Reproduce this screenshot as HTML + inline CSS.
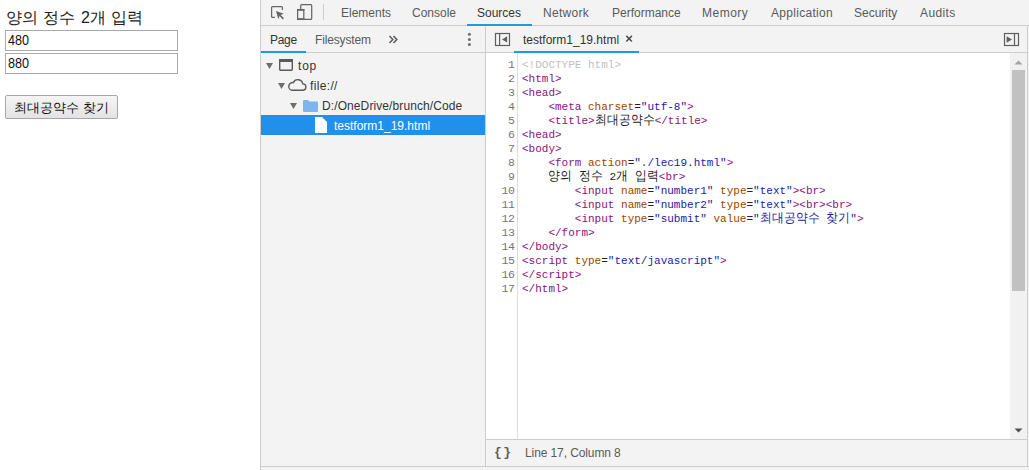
<!DOCTYPE html>
<html>
<head>
<meta charset="utf-8">
<style>
*{box-sizing:border-box}
html,body{margin:0;padding:0}
body{width:1029px;height:470px;overflow:hidden;position:relative;background:#fff;font-family:"Liberation Sans",sans-serif;}
.a{position:absolute}
.ui{position:absolute;font-size:12px;line-height:14px;color:#5a5a5a;white-space:nowrap}
.lbl{left:6px;top:8px;font-size:16px;line-height:20px;word-spacing:1px;color:#222;white-space:nowrap}
.inp{left:5px;width:173px;height:21px;border:1px solid #a9a9a9;background:#fff;font-size:14px;line-height:15px;color:#111;padding:2px 0 0 1.5px}
.inp span{display:inline-block;transform:scaleX(0.9);transform-origin:0 50%}
.btn{left:5px;top:95px;width:113px;height:24px;border:1px solid #a7a7a7;border-radius:2px;background:linear-gradient(#f5f5f5,#e3e3e3);font-size:13px;line-height:16px;color:#111;text-align:center;padding-top:4px;white-space:nowrap}
.ln{position:absolute;width:30px;text-align:right;left:484.6px;font-family:"Liberation Mono",monospace;font-size:11.5px;letter-spacing:-0.3px;line-height:14px;color:#767676}
.cl{position:absolute;left:522px;font-family:"Liberation Mono",monospace;font-size:11px;line-height:14px;color:#222;white-space:pre}
.k{font-size:12px;display:inline-block;transform:scaleY(1.1);transform-origin:50% 55%}
.tg{color:#881280}.at{color:#994500}.vl{color:#1a1aa6}.dc{color:#c0c0c0}
</style>
</head>
<body>
<!-- left page -->
<div class="a lbl">양의 정수 2개 입력</div>
<div class="a inp" style="top:30px"><span>480</span></div>
<div class="a inp" style="top:53px"><span>880</span></div>
<div class="a btn">최대공약수 찾기</div>

<!-- devtools base -->
<div class="a" style="left:260px;top:0;width:769px;height:470px;background:#f3f3f3"></div>
<div class="a" style="left:260px;top:0;width:1px;height:470px;background:#cdcdcd"></div>
<!-- toolbar border -->
<div class="a" style="left:261px;top:25px;width:768px;height:1px;background:#cdcdcd"></div>
<!-- sources underline -->
<div class="a" style="left:467px;top:24px;width:65px;height:2px;background:#1f9ae0"></div>

<!-- inspect icon -->
<svg class="a" style="left:270px;top:5px" width="16" height="16" viewBox="0 0 16 16">
  <path d="M5 12.4H2.6a1 1 0 0 1-1-1V2.6a1 1 0 0 1 1-1h8.8a1 1 0 0 1 1 1V5" fill="none" stroke="#666" stroke-width="1.25"/>
  <path d="M6 6l7.8 2.7-3.1 1.2 3.3 3.3-1.2 1.2-3.3-3.3-1.2 3.1z" fill="#666"/>
</svg>
<!-- device icon -->
<svg class="a" style="left:296px;top:3px" width="17" height="18" viewBox="0 0 17 18">
  <rect x="4.7" y="1.6" width="11" height="14.8" rx="1" fill="none" stroke="#666" stroke-width="1.25"/>
  <rect x="1.6" y="6.6" width="6.2" height="9.8" fill="#f3f3f3" stroke="#666" stroke-width="1.25"/>
  <rect x="1" y="6" width="7.4" height="1.8" fill="#666"/>
  <rect x="1" y="15.2" width="7.4" height="1.8" fill="#666"/>
</svg>
<div class="a" style="left:323px;top:4px;width:1px;height:16px;background:#cccccc"></div>

<div class="ui" style="left:341px;top:6px">Elements</div>
<div class="ui" style="left:412px;top:6px">Console</div>
<div class="ui" style="left:477px;top:6px;color:#333">Sources</div>
<div class="ui" style="left:543px;top:6px;letter-spacing:0.3px">Network</div>
<div class="ui" style="left:612px;top:6px">Performance</div>
<div class="ui" style="left:702px;top:6px;letter-spacing:0.5px">Memory</div>
<div class="ui" style="left:771px;top:6px;letter-spacing:0.3px">Application</div>
<div class="ui" style="left:854px;top:6px">Security</div>
<div class="ui" style="left:920px;top:6px;letter-spacing:0.4px">Audits</div>

<!-- nav panel -->
<div class="a" style="left:485px;top:26px;width:1px;height:441px;background:#cdcdcd"></div>
<div class="a" style="left:261px;top:52px;width:224px;height:1px;background:#cdcdcd"></div>
<div class="a" style="left:261px;top:51px;width:45px;height:2px;background:#1f9ae0"></div>
<div class="ui" style="left:270px;top:33px;color:#333;letter-spacing:-0.3px">Page</div>
<div class="ui" style="left:315px;top:33px;letter-spacing:-0.15px">Filesystem</div>
<svg class="a" style="left:388px;top:35px" width="11" height="9" viewBox="0 0 11 9"><path d="M1.5 1l3.3 3.5-3.3 3.5M5.5 1l3.3 3.5-3.3 3.5" fill="none" stroke="#5a5a5a" stroke-width="1.5"/></svg>
<svg class="a" style="left:467px;top:32px" width="5" height="15" viewBox="0 0 5 15">
  <circle cx="2.4" cy="2.3" r="1.5" fill="#6e6e6e"/><circle cx="2.4" cy="7.4" r="1.5" fill="#6e6e6e"/><circle cx="2.4" cy="12.5" r="1.5" fill="#6e6e6e"/>
</svg>

<!-- tree -->
<svg class="a" style="left:266px;top:63px" width="7" height="6" viewBox="0 0 7 6"><path d="M0 0h7L3.5 6z" fill="#6e6e6e"/></svg>
<svg class="a" style="left:278px;top:58px" width="16" height="14" viewBox="0 0 16 14">
  <rect x="1.7" y="1.7" width="12.6" height="10.6" rx="1" fill="none" stroke="#5a5a5a" stroke-width="1.4"/>
  <rect x="1" y="1" width="14" height="3" fill="#5a5a5a"/>
</svg>
<div class="ui" style="left:298px;top:59px;color:#333;letter-spacing:0.8px">top</div>

<svg class="a" style="left:278px;top:83px" width="7" height="6" viewBox="0 0 7 6"><path d="M0 0h7L3.5 6z" fill="#6e6e6e"/></svg>
<svg class="a" style="left:287px;top:78px" width="20" height="14" viewBox="0 0 20 14">
  <path d="M5 12.3h10.5a3.2 3.2 0 0 0 .3-6.4A5 5 0 0 0 6.3 4.6 3.9 3.9 0 0 0 5 12.3z" fill="none" stroke="#5a5a5a" stroke-width="1.4"/>
</svg>
<div class="ui" style="left:310px;top:79px;color:#333;letter-spacing:0.35px">file://</div>

<svg class="a" style="left:290px;top:103px" width="7" height="6" viewBox="0 0 7 6"><path d="M0 0h7L3.5 6z" fill="#6e6e6e"/></svg>
<svg class="a" style="left:303px;top:100px" width="15" height="12" viewBox="0 0 15 12">
  <path d="M0 1a1 1 0 0 1 1-1h4l1.5 1.6H14a1 1 0 0 1 1 1V11a1 1 0 0 1-1 1H1a1 1 0 0 1-1-1z" fill="#7fb4ee"/>
</svg>
<div class="ui" style="left:322px;top:99px;color:#333;letter-spacing:0.1px">D:/OneDrive/brunch/Code</div>

<div class="a" style="left:261px;top:115px;width:224px;height:20px;background:#2190ec"></div>
<svg class="a" style="left:315px;top:117px" width="12" height="16" viewBox="0 0 12 16">
  <path d="M0 0h7l5 5v11H0z" fill="#fff"/>
</svg>
<div class="ui" style="left:334px;top:119px;color:#fff">testform1_19.html</div>

<!-- editor -->
<div class="a" style="left:486px;top:53px;width:541px;height:386px;background:#fff"></div>
<div class="a" style="left:486px;top:52px;width:541px;height:1px;background:#cdcdcd"></div>
<svg class="a" style="left:494px;top:32px" width="17" height="15" viewBox="0 0 17 15">
  <rect x="1.5" y="1.5" width="14" height="12" fill="none" stroke="#5f5f5f" stroke-width="1.2"/>
  <rect x="5" y="1.5" width="1.2" height="12" fill="#5f5f5f"/>
  <path d="M13.1 4.2v6.4L8 7.4z" fill="#5f5f5f"/>
</svg>
<div class="ui" style="left:523px;top:33px;color:#333">testform1_19.html</div>
<svg class="a" style="left:625px;top:35px" width="8" height="8" viewBox="0 0 8 8"><path d="M1.3 0.9L6.9 6.5M6.9 0.9L1.3 6.5" stroke="#505050" stroke-width="1.5"/></svg>
<div class="a" style="left:514px;top:51px;width:125px;height:2px;background:#1f9ae0"></div>
<svg class="a" style="left:1003px;top:32px" width="17" height="15" viewBox="0 0 17 15">
  <rect x="1.5" y="1.5" width="14" height="12" fill="none" stroke="#5f5f5f" stroke-width="1.2"/>
  <rect x="10.9" y="1.5" width="1.2" height="12" fill="#5f5f5f"/>
  <path d="M3.6 4.2v6.6L9 7.5z" fill="#5f5f5f"/>
</svg>

<!-- gutter -->
<div class="a" style="left:517px;top:53px;width:1px;height:386px;background:#dddddd"></div>
<div class="ln" style="top:58px">1</div>
<div class="ln" style="top:72px">2</div>
<div class="ln" style="top:86px">3</div>
<div class="ln" style="top:100px">4</div>
<div class="ln" style="top:114px">5</div>
<div class="ln" style="top:128px">6</div>
<div class="ln" style="top:142px">7</div>
<div class="ln" style="top:156px">8</div>
<div class="ln" style="top:170px">9</div>
<div class="ln" style="top:184px">10</div>
<div class="ln" style="top:198px">11</div>
<div class="ln" style="top:212px">12</div>
<div class="ln" style="top:226px">13</div>
<div class="ln" style="top:240px">14</div>
<div class="ln" style="top:254px">15</div>
<div class="ln" style="top:268px">16</div>
<div class="ln" style="top:282px">17</div>

<div class="cl" style="top:58px"><span class="dc">&lt;!DOCTYPE html&gt;</span></div>
<div class="cl" style="top:72px"><span class="tg">&lt;html&gt;</span></div>
<div class="cl" style="top:86px"><span class="tg">&lt;head&gt;</span></div>
<div class="cl" style="top:100px">    <span class="tg">&lt;meta </span><span class="at">charset</span>=<span class="vl">"utf-8"</span><span class="tg">&gt;</span></div>
<div class="cl" style="top:114px">    <span class="tg">&lt;title&gt;</span><span class="k">최대공약수</span><span class="tg">&lt;/title&gt;</span></div>
<div class="cl" style="top:128px"><span class="tg">&lt;head&gt;</span></div>
<div class="cl" style="top:142px"><span class="tg">&lt;body&gt;</span></div>
<div class="cl" style="top:156px">    <span class="tg">&lt;form </span><span class="at">action</span>=<span class="vl">"./lec19.html"</span><span class="tg">&gt;</span></div>
<div class="cl" style="top:170px">    <span class="k">양의</span> <span class="k">정수</span> 2<span class="k">개</span> <span class="k">입력</span><span class="tg">&lt;br&gt;</span></div>
<div class="cl" style="top:184px">        <span class="tg">&lt;input </span><span class="at">name</span>=<span class="vl">"number1"</span><span class="tg"> </span><span class="at">type</span>=<span class="vl">"text"</span><span class="tg">&gt;&lt;br&gt;</span></div>
<div class="cl" style="top:198px">        <span class="tg">&lt;input </span><span class="at">name</span>=<span class="vl">"number2"</span><span class="tg"> </span><span class="at">type</span>=<span class="vl">"text"</span><span class="tg">&gt;&lt;br&gt;&lt;br&gt;</span></div>
<div class="cl" style="top:212px">        <span class="tg">&lt;input </span><span class="at">type</span>=<span class="vl">"submit"</span><span class="tg"> </span><span class="at">value</span>=<span class="vl">"<span class="k">최대공약수</span> <span class="k">찾기</span>"</span><span class="tg">&gt;</span></div>
<div class="cl" style="top:226px">    <span class="tg">&lt;/form&gt;</span></div>
<div class="cl" style="top:240px"><span class="tg">&lt;/body&gt;</span></div>
<div class="cl" style="top:254px"><span class="tg">&lt;script </span><span class="at">type</span>=<span class="vl">"text/javascript"</span><span class="tg">&gt;</span></div>
<div class="cl" style="top:268px"><span class="tg">&lt;/script&gt;</span></div>
<div class="cl" style="top:282px"><span class="tg">&lt;/html&gt;</span></div>

<!-- scrollbar -->
<div class="a" style="left:1010px;top:53px;width:17px;height:386px;background:#f1f1f1"></div>
<div class="a" style="left:1012px;top:70px;width:13px;height:221px;background:#c1c1c1"></div>
<svg class="a" style="left:1014px;top:60px" width="9" height="5" viewBox="0 0 9 5"><path d="M0.5 4.5L4.5 0.5 8.5 4.5z" fill="#a3a3a3"/></svg>
<svg class="a" style="left:1014px;top:428px" width="9" height="5" viewBox="0 0 9 5"><path d="M0.5 0.5L4.5 4.5 8.5 0.5z" fill="#505050"/></svg>
<div class="a" style="left:1027px;top:26px;width:1px;height:441px;background:#cdcdcd"></div>

<!-- status bar -->
<div class="a" style="left:486px;top:439px;width:541px;height:1px;background:#cdcdcd"></div>
<div class="a" style="left:261px;top:466px;width:768px;height:1px;background:#cdcdcd"></div>
<div class="ui" style="left:494px;top:446px;font-family:'Liberation Mono',monospace;font-weight:bold;font-size:13px;letter-spacing:1.5px;color:#5a5a5a">{}</div>
<div class="ui" style="left:525px;top:446px;letter-spacing:-0.1px">Line 17, Column 8</div>
</body>
</html>
